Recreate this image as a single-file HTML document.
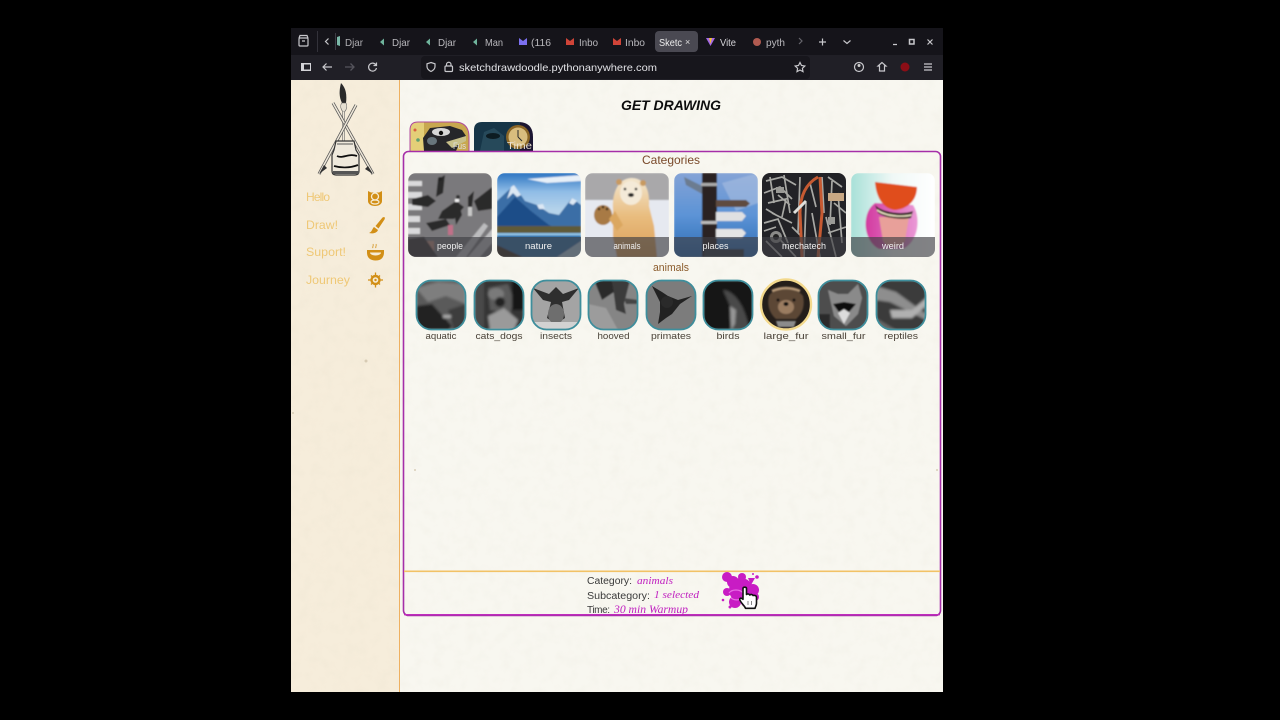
<!DOCTYPE html>
<html><head><meta charset="utf-8"><title>Sketch Draw Doodle</title>
<style>
html,body{margin:0;padding:0;background:#000;width:1280px;height:720px;overflow:hidden}
svg{display:block;position:absolute;left:0;top:0}
text{font-family:"Liberation Sans",sans-serif}
.t{font-size:10.5px;fill:#d5d4d8}
.lb{font-size:9.5px;fill:#f0f0f0;text-anchor:middle}
.sb{font-size:9.5px;fill:#4a4238;text-anchor:middle}
.nav{font-size:12px;fill:#efc876}
.ft{font-size:10px;fill:#3a3a3a}
.mg{font-size:10.5px;fill:#c020c0;font-style:italic;font-family:"Liberation Serif",serif}
</style></head><body>
<svg width="1280" height="720" viewBox="0 0 1280 720" xmlns="http://www.w3.org/2000/svg">
<defs>
<filter id="b1" x="-10%" y="-10%" width="120%" height="120%"><feGaussianBlur stdDeviation="0.9"/></filter>
<filter id="b2" x="-10%" y="-10%" width="120%" height="120%"><feGaussianBlur stdDeviation="1.4"/></filter>
<filter id="tx" x="-5%" y="-5%" width="110%" height="110%"><feGaussianBlur stdDeviation="0.3"/></filter>
<filter id="noise" x="0" y="0" width="100%" height="100%"><feTurbulence type="fractalNoise" baseFrequency="0.09" numOctaves="3" seed="4"/><feColorMatrix values="0 0 0 0 .55  0 0 0 0 .5  0 0 0 0 .38  0 0 0 .9 -.38"/></filter>
<clipPath id="c"><rect width="84" height="84" rx="8"/></clipPath>
<clipPath id="s"><rect width="50" height="50" rx="15"/></clipPath>
<clipPath id="tab"><path d="M0 29V8Q0 0 8 0H44Q59 0 59 15V29Z"/></clipPath>
<linearGradient id="sky" x1="0" y1="0" x2="0" y2="1"><stop offset="0" stop-color="#2b74c2"/><stop offset=".3" stop-color="#8fbce6"/><stop offset=".6" stop-color="#b6d3ea"/></linearGradient>
<linearGradient id="pl" x1="0" y1="0" x2="0" y2="1"><stop offset="0" stop-color="#84a3d6"/><stop offset=".5" stop-color="#5c93d6"/><stop offset="1" stop-color="#2c6cb4"/></linearGradient>
<linearGradient id="wd" x1="0" y1="0" x2="1" y2="0"><stop offset="0" stop-color="#a8e0d8"/><stop offset=".5" stop-color="#f0f8f6"/><stop offset="1" stop-color="#ffffff"/></linearGradient>
<linearGradient id="bear" x1="0" y1="0" x2="0" y2="1"><stop offset="0" stop-color="#f3e6cf"/><stop offset=".5" stop-color="#e8bb7c"/><stop offset="1" stop-color="#d99e58"/></linearGradient>
<linearGradient id="pk" x1="0" y1="0" x2="1" y2="0"><stop offset="0" stop-color="#d23aa0"/><stop offset="1" stop-color="#ea9ad6"/></linearGradient>
</defs>

<!-- browser chrome -->
<rect x="291" y="28" width="652" height="27" fill="#15141a"/>
<rect x="291" y="55" width="652" height="25" fill="#201f26"/>
<rect x="655" y="31" width="43" height="21" rx="4" fill="#4a4952"/>
<rect x="421" y="56" width="389" height="23" rx="4" fill="#17161c"/>
<rect x="317" y="31" width="1" height="21" fill="#33323a"/>
<rect x="335" y="33" width="1" height="17" fill="#3c3b44"/>
<g fill="none" stroke="#c8c8cc" stroke-width="1.2">
<rect x="299" y="38" width="9" height="8" rx="1"/><path d="M299 38l1-2.500h7l1 2.500M302 41h3"/>
<path d="M328.500 38.500l-3 3 3 3"/>
<path d="M332 67h-9M326.500 63.500 323 67l3.500 3.500"/>
<path d="M376 65a4 4 0 1 0 .5 3M376.500 62.500v3h-3"/>
<path d="M431 62.500l4 1.300v2.700c0 2.500-2 4-4 5-2-1-4-2.500-4-5v-2.700z"/>
<rect x="445" y="66" width="7.500" height="5.500" rx="1"/><path d="M446.500 66v-1.500a2.200 2.200 0 0 1 4.500 0V66"/>
<path d="M800 62.500l1.500 3 3.300.5-2.400 2.300.6 3.300-3-1.600-3 1.600.6-3.300-2.400-2.300 3.300-.5z"/>
<circle cx="859" cy="67" r="4.500"/>
<path d="M882 62.500l-4 3.500h1.500v5h5v-5h1.500z"/>
<path d="M924 64h8M924 67h8M924 70h8M819 42h7M822.500 38.500v7M843.500 40.500l3.500 3 3.500-3M893 44.500h4M927.500 39.500l5 5M932.500 39.500l-5 5"/>
<rect x="909.500" y="39.500" width="4.500" height="4.500" stroke-width="1.500"/>
</g>
<path d="M345 67h9M350.500 63.500 354 67l-3.500 3.500" fill="none" stroke="#55545c" stroke-width="1.300"/>
<path d="M799 38l3 3-3 3" fill="none" stroke="#66656c" stroke-width="1.200"/>
<rect x="301" y="63" width="10" height="8" fill="#d4d4d8"/><rect x="304" y="64.500" width="6" height="5" fill="#201f26"/>
<circle cx="859" cy="65.500" r="1.500" fill="#d0d0d0"/>
<circle cx="905" cy="67" r="4.500" fill="#8c0e16"/>
<g filter="url(#tx)">
<text class="t" x="345" y="46" textLength="18" lengthAdjust="spacingAndGlyphs" opacity=".8">Djar</text>
<text class="t" x="392" y="46" textLength="18" lengthAdjust="spacingAndGlyphs" opacity=".85">Djar</text>
<text class="t" x="438" y="46" textLength="18" lengthAdjust="spacingAndGlyphs" opacity=".85">Djar</text>
<text class="t" x="485" y="46" textLength="18" lengthAdjust="spacingAndGlyphs" opacity=".85">Man</text>
<text class="t" x="531" y="46" textLength="20" lengthAdjust="spacingAndGlyphs" opacity=".85">(116</text>
<text class="t" x="579" y="46" textLength="19" lengthAdjust="spacingAndGlyphs" opacity=".85">Inbo</text>
<text class="t" x="625" y="46" textLength="20" lengthAdjust="spacingAndGlyphs" opacity=".85">Inbo</text>
<text class="t" x="659" y="46" textLength="23" lengthAdjust="spacingAndGlyphs" style="fill:#eee">Sketc</text>
<text class="t" x="720" y="46" textLength="16" lengthAdjust="spacingAndGlyphs">Vite</text>
<text class="t" x="766" y="46" textLength="19" lengthAdjust="spacingAndGlyphs" opacity=".85">pyth</text>
<text x="459" y="71" font-size="10.500" fill="#e2e2e6" textLength="198" lengthAdjust="spacingAndGlyphs">sketchdrawdoodle.pythonanywhere.com</text>
<text x="685" y="45" font-size="9" fill="#ddd">×</text>
</g>
<path d="M337 37l3-1v10l-3-1z" fill="#7ab8a8"/>
<path d="M380 42l4-3.500v7z M426 42l4-3.500v7z M473 42l4-3.500v7z" fill="#6fb49c"/>
<path d="M519 38l4 3 4-3v7h-8z" fill="#7c70f0"/>
<path d="M566 38l4 3 4-3v7h-8zM613 38l4 3 4-3v7h-8z" fill="#d04438"/>
<path d="M706 38h9l-4.500 8z" fill="#a468e8"/><path d="M709 38h3l-1.500 6z" fill="#f0c030"/>
<circle cx="757" cy="42" r="4" fill="#b05a50"/>

<!-- page -->
<rect x="291" y="80" width="652" height="612" fill="#f8f7f0"/>
<rect x="291" y="80" width="108" height="612" fill="#f6eddb"/>
<rect x="291" y="80" width="652" height="612" filter="url(#noise)" opacity=".13"/>
<rect x="399" y="80" width="1" height="612" fill="#eeb060"/>
<g fill="#cfc3aa" opacity=".8"><circle cx="366" cy="361" r="1.500"/><circle cx="415" cy="470" r="1"/><circle cx="937" cy="470" r="1"/><circle cx="293" cy="413" r="1"/></g>

<!-- logo -->
<g filter="url(#tx)">
<path d="M341 83c5 5 6 12 5 20l-4 0c-3-6-3-12-1-20z" fill="#2a2a2a"/>
<path d="M341.500 103c-1.500 3-1 6 1.500 9h1.500c2.500-3 3-6 1.500-9z" fill="#e6e0d2" stroke="#666" stroke-width=".6"/>
<path d="M343.500 112v30" stroke="#666" stroke-width="2.200"/>
<path d="M343.500 112v30" stroke="#efe8da" stroke-width="1"/>
<path d="M333 103l40 71" stroke="#555" stroke-width="3" fill="none"/>
<path d="M333 103l40 71" stroke="#efe8da" stroke-width="1.500" fill="none"/>
<path d="M356 105l-37 69" stroke="#555" stroke-width="3" fill="none"/>
<path d="M356 105l-37 69" stroke="#efe8da" stroke-width="1.500" fill="none"/>
<path d="M324 165l-5 9 8-6z" fill="#333"/><path d="M368 166l5 8-8-5z" fill="#333"/>
<path d="M336 141h18l2 9 3 5v16c0 3-2 4-4 4h-19c-2 0-4-1-4-4v-16l2-5z" fill="#efe9dc" stroke="#333" stroke-width="1.200"/>
<path d="M337 156c6 3 12-3 20 0M334 166c7 2 16 2 24-1" stroke="#111" stroke-width="1.800" fill="none"/>
<path d="M333 171h26v3h-26z" fill="#555"/>
<path d="M337 144h16" stroke="#555" stroke-width="1"/>
</g>

<!-- nav -->
<g filter="url(#tx)">
<text class="nav" x="306" y="201" textLength="24" lengthAdjust="spacing">Hello</text>
<text class="nav" x="306" y="229" textLength="32" lengthAdjust="spacingAndGlyphs">Draw!</text>
<text class="nav" x="306" y="256" textLength="40" lengthAdjust="spacingAndGlyphs">Suport!</text>
<text class="nav" x="306" y="284" textLength="44" lengthAdjust="spacingAndGlyphs">Journey</text>
</g>
<g fill="#d28f16">
<path d="M368 191l3 1.500h8l3-1.500v10c0 3-3 5-7 5s-7-2-7-5z"/>
<circle cx="375" cy="196.500" r="3.500" fill="none" stroke="#f6ecd6" stroke-width="1.300"/>
<ellipse cx="375" cy="202" rx="4" ry="2" fill="none" stroke="#f6ecd6" stroke-width="1.200"/>
<path d="M384 217c1 0 1 1.500 .5 2.500l-6 9-3-2.500 7-8.500z"/>
<path d="M374 227l4 3c-1 3-5 4-9 3 3-1 3-4 5-6z"/>
<path d="M367 250h17v2.500c0 5-3 8-8.500 8s-8.500-3-8.500-8z"/>
<path d="M370 252.500h11c0 2-3 3-5.500 3s-5.500-1-5.500-3z" fill="#f6ecd6"/>
<path d="M373 248c-1-1.500 1-2 0-4M376 248c-1-1.500 1-2 0-4" stroke="#d28f16" stroke-width=".8" fill="none"/>
<circle cx="375.500" cy="280" r="5.200"/>
<path d="M375.500 272.500v15M368 280h15M371 275.500l9 9M380 275.500l-9 9" stroke="#d28f16" stroke-width="1.300"/>
<circle cx="375.500" cy="280" r="2.800" fill="#f6ecd6"/>
<circle cx="375.500" cy="280" r="1.200"/>
</g>

<!-- title -->
<text x="621" y="110" font-size="14" font-weight="bold" font-style="italic" fill="#111" textLength="100" lengthAdjust="spacingAndGlyphs" filter="url(#tx)">GET DRAWING</text>

<!-- top tabs -->
<g transform="translate(410 122)"><g clip-path="url(#tab)"><g filter="url(#tx)">
<rect width="59" height="29" fill="#c8a850"/>
<rect width="14" height="29" fill="#e4cf78"/>
<circle cx="5" cy="8" r="1.500" fill="#d86040"/><circle cx="8" cy="18" r="1.800" fill="#60a070"/>
<path d="M13 16 20 6 40 4 52 8 56 14 50 20 46 29H14z" fill="#26252b"/>
<ellipse cx="31" cy="10" rx="9" ry="4" fill="#d8d8d8"/><circle cx="31" cy="11" r="2.200" fill="#111"/>
<ellipse cx="22" cy="19" rx="5" ry="4" fill="#68747c"/><path d="M36 20l20-6v5l-14 7z" fill="#c8c08a"/>
<text x="43" y="27" font-size="9" fill="#e0e0e0" textLength="13" lengthAdjust="spacingAndGlyphs">Fus</text>
</g></g><path d="M0 29V8Q0 0 8 0H44Q59 0 59 15V29" fill="none" stroke="#b04a9c" stroke-width="1"/></g>
<g transform="translate(474 122)"><g clip-path="url(#tab)"><g filter="url(#tx)">
<rect width="59" height="29" fill="#173447"/>
<rect x="46" y="0" width="13" height="29" fill="#1e1830"/>
<path d="M6 29 10 10 20 6 30 14 30 29z" fill="#264a5a"/>
<ellipse cx="19" cy="14" rx="7" ry="3" fill="#0e1a22"/>
<circle cx="44" cy="15" r="12" fill="#8a6628"/><circle cx="44" cy="15" r="9.500" fill="#d8bd7e"/>
<path d="M44 15v-7M44 15l4 4" stroke="#2a2a2a" stroke-width="1"/>
<text x="33" y="27" font-size="10.500" fill="#e8e0d0" textLength="25" lengthAdjust="spacingAndGlyphs">Time</text>
</g></g></g>

<!-- container -->
<rect x="403.500" y="151.500" width="537" height="464" rx="5" fill="none" stroke="#a52ea8" stroke-width="1.600"/>
<rect x="404" y="570.500" width="536" height="1.600" fill="#f2c266"/>
<rect x="404" y="614" width="536" height="1.300" fill="#c02cbc"/>
<text x="671" y="164" font-size="12" fill="#7a4a2a" text-anchor="middle" textLength="58" lengthAdjust="spacingAndGlyphs" filter="url(#tx)">Categories</text>
<text x="671" y="271" font-size="11" fill="#8a5a2a" text-anchor="middle" textLength="36" lengthAdjust="spacingAndGlyphs" filter="url(#tx)">animals</text>

<!-- people -->
<g transform="translate(408 173)"><g clip-path="url(#c)"><g filter="url(#b1)">
<rect width="84" height="84" fill="#7a797c"/>
<g fill="#dadadc"><rect y="8" width="14" height="5"/><rect y="19" width="14" height="6"/><rect y="31" width="14" height="6"/><rect y="43" width="12" height="6"/><rect y="55" width="12" height="6"/></g>
<path d="M60 84 84 56V70L72 84zM48 84 76 50l4 3-22 31z" fill="#bcbcbe"/>
<g fill="#2c2a2c">
<path d="M4 26 20 22 28 28 20 34 4 32z"/><path d="M34 38 48 28 56 34 46 46 30 46z"/><path d="M18 50 38 46 42 52 24 58z"/><path d="M66 28 84 14V36L70 38z"/>
<path d="M30 6 37 2 35 20 28 24z"/><path d="M46 38 50 26 54 42 48 52z"/><path d="M60 24 66 18 64 34 60 36z"/></g>
<rect x="47" y="26" width="4" height="3" fill="#f2f2f2"/>
<circle cx="32" cy="6" r="2" fill="#222"/><circle cx="50" cy="24" r="2" fill="#333"/>
<rect x="40" y="52" width="5" height="10" fill="#c07088"/><rect x="18" y="68" width="8" height="10" fill="#c09080"/><rect x="60" y="34" width="4" height="9" fill="#c8c8c8"/>
<path d="M0 66 16 64 30 84H0z" fill="#3a3436"/>
</g></g></g>
<!-- nature -->
<g transform="translate(497 173)"><g clip-path="url(#c)"><g filter="url(#b1)">
<rect width="84" height="62" fill="url(#sky)"/>
<path d="M30 6 84 2V8L50 10z" fill="#e8f0f8"/>
<path d="M0 28 17 12 28 28 40 32 52 40 62 42 75 25 84 32V60H0z" fill="#3a6ea6"/>
<path d="M14 14 17 12 24 22 20 24 16 20 10 26zM40 32 46 31 48 36 42 36zM75 25 80 28 76 32 72 30z" fill="#dce8f4"/>
<path d="M0 44 18 24 34 38 52 52 62 56H0z" fill="#1f4e88"/>
<rect y="53" width="84" height="7" fill="#5e5a38"/>
<rect y="60" width="84" height="24" fill="#2f6fa8"/>
<rect y="60" width="84" height="2.500" fill="#8cc0e4"/>
<path d="M0 72 26 84H0z" fill="#3a3226"/>
<path d="M60 84 84 68V84z" fill="#a8c8dc"/>
</g></g></g>
<!-- animals -->
<g transform="translate(585 173)"><g clip-path="url(#c)"><g filter="url(#b1)">
<rect width="84" height="84" fill="#a9a8aa"/>
<rect y="27" width="84" height="57" fill="#e6e9f0"/>
<path d="M28 36C27 24 31 6 46 5c14 0 19 12 18 28l5 20 3 31H32l-4-20z" fill="url(#bear)"/>
<circle cx="34" cy="9" r="3" fill="#c89a60"/><circle cx="58" cy="10" r="3" fill="#c89a60"/>
<ellipse cx="46" cy="20" rx="11" ry="12" fill="#f4ead8"/>
<circle cx="40" cy="16" r="1.300" fill="#222"/><circle cx="51" cy="16" r="1.300" fill="#222"/>
<ellipse cx="46" cy="22" rx="3" ry="2" fill="#222"/>
<ellipse cx="18" cy="42" rx="9" ry="10" fill="#a87a44"/>
<path d="M24 46l8 12 6-6-8-14z" fill="#dba760"/>
<g fill="#3a2a1a"><circle cx="14" cy="36" r="1.300"/><circle cx="18" cy="34" r="1.300"/><circle cx="22" cy="36" r="1.300"/></g>
</g></g></g>
<!-- places -->
<g transform="translate(674 173)"><g clip-path="url(#c)"><g filter="url(#b1)">
<rect width="84" height="84" fill="url(#pl)"/>
<path d="M48 10 84 0V30L62 38z" fill="#a8bee0" opacity=".6"/>
<path d="M10 4 30 14 30 22 12 12z" fill="#6c7c90"/>
<rect x="28" y="0" width="15" height="84" fill="#2a2422"/>
<rect x="27" y="10" width="16" height="3" fill="#aaa"/><rect x="27" y="48" width="16" height="3" fill="#bbb"/>
<path d="M42 27H72L76 30.500 72 34H42z" fill="#5e4c40"/>
<path d="M42 39H68L72 43 68 48H42z" fill="#dfe0e2"/>
<path d="M42 56H68L72 60 68 65H42z" fill="#e4e4e4"/>
<path d="M30 76H70V84H30z" fill="#2e3842"/>
</g></g></g>
<!-- mechatech -->
<g transform="translate(762 173)"><g clip-path="url(#c)"><g filter="url(#tx)">
<rect width="84" height="84" fill="#232427"/>
<g fill="none" stroke="#a8a8a4" stroke-width="1.700">
<path d="M4 8 20 4 34 12M2 20 18 14 30 26M6 30 24 26 20 44M10 40 30 50M2 50 16 46 26 70M8 4 12 30M22 2 28 40M38 4 36 60M44 30 42 84M60 4 62 40M70 8 68 52M76 20 80 70M64 44 74 84M50 40 58 84M12 60 34 84M4 68 20 84M16 22 28 32M4 36 14 42M66 4 80 14M72 30 84 40M48 10 54 34M30 54 38 62M66 60 84 54M2 58 14 54"/>
</g>
<g fill="none" stroke="#c65a30" stroke-width="3"><path d="M40 84 38 40Q38 14 56 4"/><path d="M56 84 60 40 58 4"/></g>
<path d="M32 40 44 28" stroke="#e0e0dc" stroke-width="3"/>
<rect x="66" y="20" width="16" height="8" fill="#c8a884"/>
<circle cx="14" cy="64" r="6" fill="#8a8a88"/><circle cx="14" cy="64" r="3" fill="#222"/>
<g fill="#9a9a96"><rect x="14" y="14" width="8" height="6"/><rect x="66" y="44" width="7" height="7"/></g>
</g></g></g>
<!-- weird -->
<g transform="translate(851 173)"><g clip-path="url(#c)"><g filter="url(#b1)">
<rect width="84" height="84" fill="url(#wd)"/>
<path d="M24 30C10 40 12 68 28 76H52C68 68 70 44 62 32z" fill="url(#pk)"/>
<path d="M28 44H58L54 68C50 76 36 76 32 68z" fill="#e8a09a"/>
<path d="M24 32C32 40 52 42 62 38L60 45C48 47 34 45 27 40z" fill="#2c241c"/>
<path d="M26 36C34 42 50 44 61 41L60 43C50 45 34 44 26 38z" fill="#e8e0c0"/>
<path d="M24 9 66 14C66 28 56 36 44 37 32 36 25 24 24 9z" fill="#e04e1c"/>
</g></g></g>
<!-- label bands -->
<g fill="#3f3f44" opacity=".65">
<path d="M408 237h84v12a8 8 0 0 1-8 8h-68a8 8 0 0 1-8-8z"/>
<path d="M497 237h84v12a8 8 0 0 1-8 8h-68a8 8 0 0 1-8-8z"/>
<path d="M585 237h84v12a8 8 0 0 1-8 8h-68a8 8 0 0 1-8-8z"/>
<path d="M674 237h84v12a8 8 0 0 1-8 8h-68a8 8 0 0 1-8-8z"/>
<path d="M762 237h84v12a8 8 0 0 1-8 8h-68a8 8 0 0 1-8-8z"/>
<path d="M851 237h84v12a8 8 0 0 1-8 8h-68a8 8 0 0 1-8-8z"/>
</g>
<g filter="url(#tx)">
<text class="lb" x="450" y="249" textLength="26" lengthAdjust="spacingAndGlyphs">people</text>
<text class="lb" x="538.500" y="249" textLength="27" lengthAdjust="spacingAndGlyphs">nature</text>
<text class="lb" x="627" y="249" textLength="27" lengthAdjust="spacingAndGlyphs">animals</text>
<text class="lb" x="715.500" y="249" textLength="26" lengthAdjust="spacingAndGlyphs">places</text>
<text class="lb" x="804" y="249" textLength="44" lengthAdjust="spacingAndGlyphs">mechatech</text>
<text class="lb" x="893" y="249" textLength="22" lengthAdjust="spacingAndGlyphs">weird</text>
</g>

<!-- subcategories -->
<g transform="translate(416 280)"><g clip-path="url(#s)"><g filter="url(#b2)">
<rect width="50" height="50" fill="#5a5a5a"/><path d="M0 8 22 2 50 4V24L30 16 12 22z" fill="#7e7e7e"/><path d="M0 26 16 24 36 46 32 50H0z" fill="#222"/><path d="M32 30 50 24V50H38z" fill="#3e3e3e"/><rect x="27" y="35" width="8" height="3" fill="#aaa"/></g></g></g>
<g transform="translate(474 280)"><g clip-path="url(#s)"><g filter="url(#b2)">
<rect width="50" height="50" fill="#343434"/><path d="M14 8 34 4 40 20 36 34 16 30z" fill="#5a5a5a"/><ellipse cx="22" cy="14" rx="8" ry="6" fill="#7a7a7a"/><circle cx="26" cy="22" r="5" fill="#222"/><path d="M14 36 30 28 44 40 40 50H16z" fill="#9a9a9a"/><rect x="38" y="0" width="12" height="30" fill="#171717"/><rect y="0" width="10" height="50" fill="#4a4a4a"/></g></g></g>
<g transform="translate(531 280)"><g clip-path="url(#s)"><g filter="url(#tx)">
<rect width="50" height="50" fill="#a4a4a4"/><path d="M2 8 18 14 25 7 32 14 48 8 38 20 31 22 34 38 25 44 16 38 20 22 12 20z" fill="#2e2e2e"/><ellipse cx="25" cy="34" rx="8" ry="10" fill="#6e6e6e"/><rect y="42" width="50" height="8" fill="#d2d2d2"/></g></g></g>
<g transform="translate(588 280)"><g clip-path="url(#s)"><g filter="url(#b1)">
<rect width="50" height="50" fill="#858585"/><path d="M6 0 24 0 26 12 14 20z" fill="#2c2c2c"/><path d="M24 0 42 0 36 24 38 34 28 30z" fill="#3a3a3a"/><path d="M36 18 50 20 50 24 38 24z" fill="#444"/><path d="M0 24 18 28 30 50H0z" fill="#9c9c9c"/></g></g></g>
<g transform="translate(646 280)"><g clip-path="url(#s)"><g filter="url(#tx)">
<rect width="50" height="50" fill="#7c7c7c"/><path d="M6 6 16 12 22 16 32 20 46 16 34 24 26 34 20 38 12 44 14 32 14 22z" fill="#222"/><circle cx="21" cy="22" r="6" fill="#2a2a2a"/></g></g></g>
<g transform="translate(703 280)"><g clip-path="url(#s)"><g filter="url(#b2)">
<rect width="50" height="50" fill="#141414"/><path d="M20 10C32 10 44 30 46 50H28L28 28z" fill="#484848"/><path d="M27 26 33 30 32 44 28 50z" fill="#969696"/></g></g></g>
<g transform="translate(818 280)"><g clip-path="url(#s)"><g filter="url(#b1)">
<rect width="50" height="50" fill="#4e4e4e"/><path d="M10 10 20 14 30 14 40 4 44 18 40 34 28 46 16 36z" fill="#8a8a8a"/><path d="M15 24 26 22 38 24 32 31 26 36 20 31z" fill="#111"/><path d="M20 33 26 29 32 33 26 44z" fill="#dcdcdc"/><rect y="34" width="12" height="16" fill="#2a2a2a"/></g></g></g>
<g transform="translate(876 280)"><g clip-path="url(#s)"><g filter="url(#b2)">
<rect width="50" height="50" fill="#3a3a3a"/><path d="M0 6 20 12 50 34V40L14 22 0 20z" fill="#8e8e8e"/><path d="M14 30 36 30 50 18V26L36 38 16 38z" fill="#b0b0b0"/><path d="M0 38 20 50H0z" fill="#666"/></g></g></g>
<g fill="none" stroke="#3e8e9c" stroke-width="1.800">
<rect x="416.500" y="280.500" width="49" height="49" rx="15"/>
<rect x="474.500" y="280.500" width="49" height="49" rx="15"/>
<rect x="531.500" y="280.500" width="49" height="49" rx="15"/>
<rect x="588.500" y="280.500" width="49" height="49" rx="15"/>
<rect x="646.500" y="280.500" width="49" height="49" rx="15"/>
<rect x="703.500" y="280.500" width="49" height="49" rx="15"/>
<rect x="818.500" y="280.500" width="49" height="49" rx="15"/>
<rect x="876.500" y="280.500" width="49" height="49" rx="15"/>
</g>
<!-- selected bear -->
<circle cx="786" cy="304.500" r="25" fill="#241e1a" stroke="#f3d98c" stroke-width="2.400"/>
<g filter="url(#b1)">
<path d="M769 296c4-9 28-9 34 0 2 9 0 17-7 23h-20c-7-6-9-15-7-23z" fill="#5c4636"/>
<ellipse cx="786" cy="307" rx="8" ry="7" fill="#9a7c60"/>
<circle cx="778" cy="300" r="1.500" fill="#111"/><circle cx="794" cy="300" r="1.500" fill="#111"/>
<ellipse cx="786" cy="304" rx="2.500" ry="2" fill="#111"/>
<path d="M772 291q14-6 28 0" stroke="#b89a78" stroke-width="2.500" fill="none"/>
<path d="M776 321h20l-2 6h-16z" fill="#8c8c8c"/>
</g>
<g filter="url(#tx)">
<text class="sb" x="441" y="339" textLength="31" lengthAdjust="spacingAndGlyphs">aquatic</text>
<text class="sb" x="499" y="339" textLength="47" lengthAdjust="spacingAndGlyphs">cats_dogs</text>
<text class="sb" x="556" y="339" textLength="32" lengthAdjust="spacingAndGlyphs">insects</text>
<text class="sb" x="613.500" y="339" textLength="32" lengthAdjust="spacingAndGlyphs">hooved</text>
<text class="sb" x="671" y="339" textLength="40" lengthAdjust="spacingAndGlyphs">primates</text>
<text class="sb" x="728" y="339" textLength="23" lengthAdjust="spacingAndGlyphs">birds</text>
<text class="sb" x="786" y="339" textLength="45" lengthAdjust="spacingAndGlyphs">large_fur</text>
<text class="sb" x="843.500" y="339" textLength="44" lengthAdjust="spacingAndGlyphs">small_fur</text>
<text class="sb" x="901" y="339" textLength="34" lengthAdjust="spacingAndGlyphs">reptiles</text>
</g>

<!-- footer -->
<g filter="url(#tx)">
<text class="ft" x="587" y="584" textLength="45" lengthAdjust="spacingAndGlyphs">Category:</text>
<text class="mg" x="637" y="584" textLength="36" lengthAdjust="spacingAndGlyphs">animals</text>
<text class="ft" x="587" y="599" textLength="63" lengthAdjust="spacingAndGlyphs">Subcategory:</text>
<text class="mg" x="654" y="598" textLength="45" lengthAdjust="spacingAndGlyphs">1 selected</text>
<text class="ft" x="587" y="613" textLength="23" lengthAdjust="spacing">Time:</text>
<text class="mg" x="614" y="613" textLength="74" lengthAdjust="spacingAndGlyphs" style="font-size:12px">30 min Warmup</text>
</g>
<!-- splat -->
<g fill="#c81cc4">
<circle cx="741" cy="590" r="12"/><circle cx="727" cy="577" r="5"/><circle cx="742" cy="577" r="4"/><circle cx="733" cy="582" r="6"/>
<circle cx="753" cy="590" r="6"/><circle cx="755" cy="597" r="4"/><circle cx="735" cy="602" r="6"/><circle cx="727" cy="592" r="4"/><circle cx="746" cy="602" r="5"/>
<circle cx="757" cy="577" r="1.800"/><circle cx="753" cy="574" r="1"/><circle cx="723" cy="600" r="1.300"/><circle cx="730" cy="607" r="1.500"/>
<path d="M733 583l8-5 6 4-6 6zM748 578l7 0-4 7z"/>
</g>
<path d="M729 593c3-4 11-4 14 0M731 598c4 3 9 2 12 0" fill="none" stroke="#e86ce4" stroke-width="1.200"/>
<!-- hand cursor -->
<path d="M743 588.500c0-1.800 3.500-1.800 3.500 0v6c1-1 2.800-.5 3.300.5 1-1 2.800-.5 3.200.5 1-.5 3.500 0 3.500 1.800v6c0 2-1 3-1.500 5h-9.500c-.5-2-3.500-4-5.500-8-1-2 1-3 3-1v-11z" fill="#fff" stroke="#111" stroke-width="1.600" stroke-linejoin="round"/>
<path d="M748 601v4M751.500 601v4" stroke="#555" stroke-width=".7"/>
</svg>
</body></html>
